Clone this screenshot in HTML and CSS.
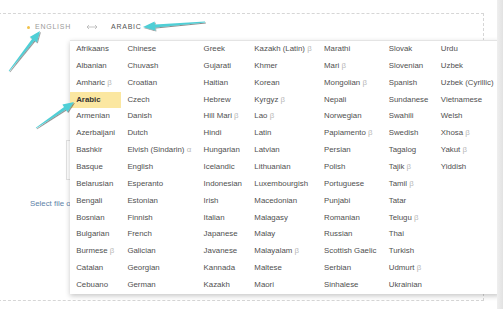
FILE: index.html
```html
<!DOCTYPE html>
<html>
<head>
  <title>Translate</title>
  <link rel="stylesheet" href="styles.css">
</head>
<body>
  <div class="page">
    <div class="frame">
      <div class="langbar">
        <span class="dot"></span>
        <span class="lang lang-from">English</span>
        <svg class="swap" width="12" height="6" viewBox="0 0 12 6">
          <path d="M1 3h10M3 1L1 3l2 2M9 1l2 2-2 2" fill="none" stroke="#b5b5b5" stroke-width="0.8"/>
        </svg>
        <span class="lang lang-to">Arabic</span>
      </div>
      <div class="source"></div>
      <div class="file-row"><span class="file-link">Select file or drag it here</span></div>
    </div>

    <div class="lang-menu">
      <div class="col">
        <span class="item">Afrikaans</span>
        <span class="item">Albanian</span>
        <span class="item">Amharic <i>β</i></span>
        <span class="item active">Arabic</span>
        <span class="item">Armenian</span>
        <span class="item">Azerbaijani</span>
        <span class="item">Bashkir</span>
        <span class="item">Basque</span>
        <span class="item">Belarusian</span>
        <span class="item">Bengali</span>
        <span class="item">Bosnian</span>
        <span class="item">Bulgarian</span>
        <span class="item">Burmese <i>β</i></span>
        <span class="item">Catalan</span>
        <span class="item">Cebuano</span>
      </div>
      <div class="col">
        <span class="item">Chinese</span>
        <span class="item">Chuvash</span>
        <span class="item">Croatian</span>
        <span class="item">Czech</span>
        <span class="item">Danish</span>
        <span class="item">Dutch</span>
        <span class="item">Elvish (Sindarin) <i>α</i></span>
        <span class="item">English</span>
        <span class="item">Esperanto</span>
        <span class="item">Estonian</span>
        <span class="item">Finnish</span>
        <span class="item">French</span>
        <span class="item">Galician</span>
        <span class="item">Georgian</span>
        <span class="item">German</span>
      </div>
      <div class="col">
        <span class="item">Greek</span>
        <span class="item">Gujarati</span>
        <span class="item">Haitian</span>
        <span class="item">Hebrew</span>
        <span class="item">Hill Mari <i>β</i></span>
        <span class="item">Hindi</span>
        <span class="item">Hungarian</span>
        <span class="item">Icelandic</span>
        <span class="item">Indonesian</span>
        <span class="item">Irish</span>
        <span class="item">Italian</span>
        <span class="item">Japanese</span>
        <span class="item">Javanese</span>
        <span class="item">Kannada</span>
        <span class="item">Kazakh</span>
      </div>
      <div class="col">
        <span class="item">Kazakh (Latin) <i>β</i></span>
        <span class="item">Khmer</span>
        <span class="item">Korean</span>
        <span class="item">Kyrgyz <i>β</i></span>
        <span class="item">Lao <i>β</i></span>
        <span class="item">Latin</span>
        <span class="item">Latvian</span>
        <span class="item">Lithuanian</span>
        <span class="item">Luxembourgish</span>
        <span class="item">Macedonian</span>
        <span class="item">Malagasy</span>
        <span class="item">Malay</span>
        <span class="item">Malayalam <i>β</i></span>
        <span class="item">Maltese</span>
        <span class="item">Maori</span>
      </div>
      <div class="col">
        <span class="item">Marathi</span>
        <span class="item">Mari <i>β</i></span>
        <span class="item">Mongolian <i>β</i></span>
        <span class="item">Nepali</span>
        <span class="item">Norwegian</span>
        <span class="item">Papiamento <i>β</i></span>
        <span class="item">Persian</span>
        <span class="item">Polish</span>
        <span class="item">Portuguese</span>
        <span class="item">Punjabi</span>
        <span class="item">Romanian</span>
        <span class="item">Russian</span>
        <span class="item">Scottish Gaelic</span>
        <span class="item">Serbian</span>
        <span class="item">Sinhalese</span>
      </div>
      <div class="col">
        <span class="item">Slovak</span>
        <span class="item">Slovenian</span>
        <span class="item">Spanish</span>
        <span class="item">Sundanese</span>
        <span class="item">Swahili</span>
        <span class="item">Swedish</span>
        <span class="item">Tagalog</span>
        <span class="item">Tajik <i>β</i></span>
        <span class="item">Tamil <i>β</i></span>
        <span class="item">Tatar</span>
        <span class="item">Telugu <i>β</i></span>
        <span class="item">Thai</span>
        <span class="item">Turkish</span>
        <span class="item">Udmurt <i>β</i></span>
        <span class="item">Ukrainian</span>
      </div>
      <div class="col">
        <span class="item">Urdu</span>
        <span class="item">Uzbek</span>
        <span class="item">Uzbek (Cyrillic)</span>
        <span class="item">Vietnamese</span>
        <span class="item">Welsh</span>
        <span class="item">Xhosa <i>β</i></span>
        <span class="item">Yakut <i>β</i></span>
        <span class="item">Yiddish</span>
      </div>
    </div>

    <svg class="notes" width="497" height="309" viewBox="0 0 497 309">
      <defs>
        <filter id="shade" x="-20%" y="-20%" width="140%" height="140%">
          <feDropShadow dx="0.8" dy="1" stdDeviation="0.7" flood-color="#000" flood-opacity="0.45"/>
        </filter>
      </defs>
      <g fill="#4fcfd6" filter="url(#shade)">
        <polygon points="40,31 36.8,42.5 34.4,40.6 9.3,71.2 8.7,70.8 32.2,38.8 29.7,36.9"/>
        <polygon points="143,27 154.6,21.5 154.9,24.5 205,21.5 205,22.5 155.1,27.5 155.4,30.5"/>
        <polygon points="74,102 67.4,111.9 65.7,109.4 36.2,128.3 35.8,127.7 64.1,107 62.4,104.5"/>
      </g>
    </svg>
  </div>
  <div class="scrollbar"></div>
</body>
</html>
```

FILE: styles.css
```css
html, body { margin: 0; height: 100%; }
body {
  display: flex;
  font-family: "Liberation Sans", Arial, sans-serif;
  background: #fff;
  overflow: hidden;
}

.page {
  position: relative;
  width: 497px;
  height: 309px;
  overflow: hidden;
}

.scrollbar {
  flex: 1;
  background: linear-gradient(to right, #efefef, #e2e2e2);
}

.frame {
  margin: 13px 0 0 -2px;
  width: 484px;
  height: 286px;
  border: 1px dashed #d6d6d6;
}

.langbar {
  display: flex;
  align-items: center;
  height: 8px;
  padding: 9px 0 0 28px;
}
.dot {
  width: 3px;
  height: 3px;
  border-radius: 50%;
  background: #f1c24a;
  margin-right: 5px;
}
.lang {
  font-size: 7px;
  letter-spacing: 0.75px;
  text-transform: uppercase;
  line-height: 8px;
}
.lang-from { color: #9a9a9a; }
.lang-to { color: #555; }
.swap { margin: 0 13px 0 15px; }

.source {
  margin: 109px 0 0 67px;
  width: 400px;
  height: 38px;
  border: 1px solid #e2e2e2;
}

/* the link runs on under the open menu; only its start shows */
.file-row {
  width: 40px;
  margin-left: 31px;
  padding-top: 19px;
  overflow: hidden;
  white-space: nowrap;
  font-size: 7.85px;
  line-height: 9px;
}
.file-link { color: #5d82a8; }

.lang-menu {
  position: absolute;
  left: 70px;
  top: 40px;
  display: flex;
  background: #fff;
  border-top: 1px solid #e4e4e4;
  box-shadow: 0 2px 5px rgba(0, 0, 0, 0.22);
}
.col {
  display: flex;
  flex-direction: column;
}
.item {
  display: block;
  padding: 0 6.2px;
  height: 16.86px;
  line-height: 16.86px;
  font-size: 7.85px;
  color: #505050;
  white-space: nowrap;
}
.item i {
  font-style: normal;
  color: #b8b8b8;
}
.item.active {
  background: #fbe7a1;
  color: #333;
  font-weight: bold;
}

.notes {
  position: absolute;
  left: 0;
  top: 0;
  pointer-events: none;
}
```
